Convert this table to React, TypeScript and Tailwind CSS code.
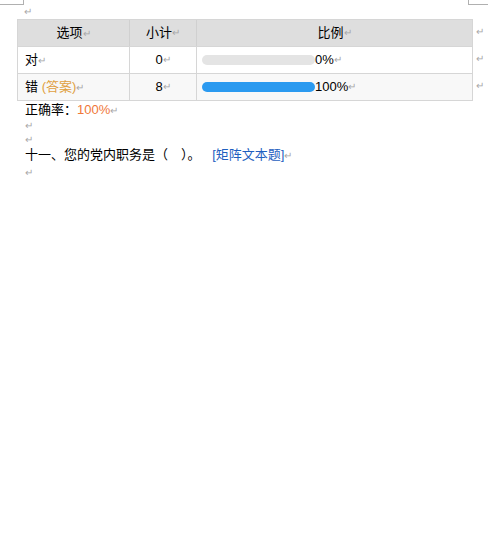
import React from "react";

const R = () => <span className="text-[10px] text-[#a8a8a8] leading-none">↵</span>;

export default function App() {
  const font = { fontFamily: '"Liberation Sans", "Noto Sans CJK SC", sans-serif' };
  return (
    <div className="relative w-[504px] h-[539px] bg-white text-[13px] text-black" style={font}>
      <div className="absolute left-0 top-0 w-[24px] h-[5px] border-b border-r border-[#b0b0b0]" />
      <div className="absolute left-[468px] top-0 w-[20px] h-[5px] border-b border-l border-[#b0b0b0]" />
      <div className="pt-[5px] pl-[24px] h-[19px] leading-[12px]"><R /></div>
      <div className="flex">
        <div className="ml-[17px] w-[456px] border border-[#d6d6d6]">
          <div className="flex h-[26px] bg-[#dedede] items-center">
            <div className="w-[111px] text-center">选项<R /></div>
            <div className="w-[67px] h-full flex items-center justify-center border-l border-[#d0d0d0]">小计<R /></div>
            <div className="flex-1 h-full flex items-center justify-center border-l border-[#d0d0d0]">比例<R /></div>
          </div>
          <div className="flex h-[27px] items-center border-t border-[#d6d6d6]">
            <div className="w-[111px] pl-[7px]">对<R /></div>
            <div className="w-[67px] h-full flex items-center justify-center border-l border-[#d6d6d6]">0<R /></div>
            <div className="flex-1 h-full flex items-center pl-[5px] border-l border-[#d6d6d6]">
              <div className="w-[113px] h-[10px] rounded-full bg-[#e4e4e4]" />
              <span>0%</span><R />
            </div>
          </div>
          <div className="flex h-[27px] items-center border-t border-[#d6d6d6] bg-[#f8f8f8]">
            <div className="w-[111px] pl-[7px]">错 <span className="text-[#e0a040]">(答案)</span><R /></div>
            <div className="w-[67px] h-full flex items-center justify-center border-l border-[#d6d6d6]">8<R /></div>
            <div className="flex-1 h-full flex items-center pl-[5px] border-l border-[#d6d6d6]">
              <div className="w-[113px] h-[10px] rounded-full bg-[#2b9af0]" />
              <span>100%</span><R />
            </div>
          </div>
        </div>
        <div className="flex flex-col pl-[3px]">
          <div className="h-[27px] pt-[2px]"><R /></div>
          <div className="h-[27px] pt-[2px]"><R /></div>
          <div className="h-[27px] pt-[2px]"><R /></div>
        </div>
      </div>
      <div className="pl-[25px] h-[17px] leading-[17px]">正确率：<span className="text-[#f07838]">100%</span><R /></div>
      <div className="pl-[25px] h-[14px] leading-[14px]"><R /></div>
      <div className="pl-[25px] h-[14px] leading-[14px]"><R /></div>
      <div className="pl-[25px] h-[17px] leading-[17px]">十一、您的党内职务是（　）。 <span className="ml-[8px] text-[#1f5fbf]">[矩阵文本题]</span><R /></div>
      <div className="pl-[25px] h-[17px] leading-[17px]"><R /></div>
    </div>
  );
}
